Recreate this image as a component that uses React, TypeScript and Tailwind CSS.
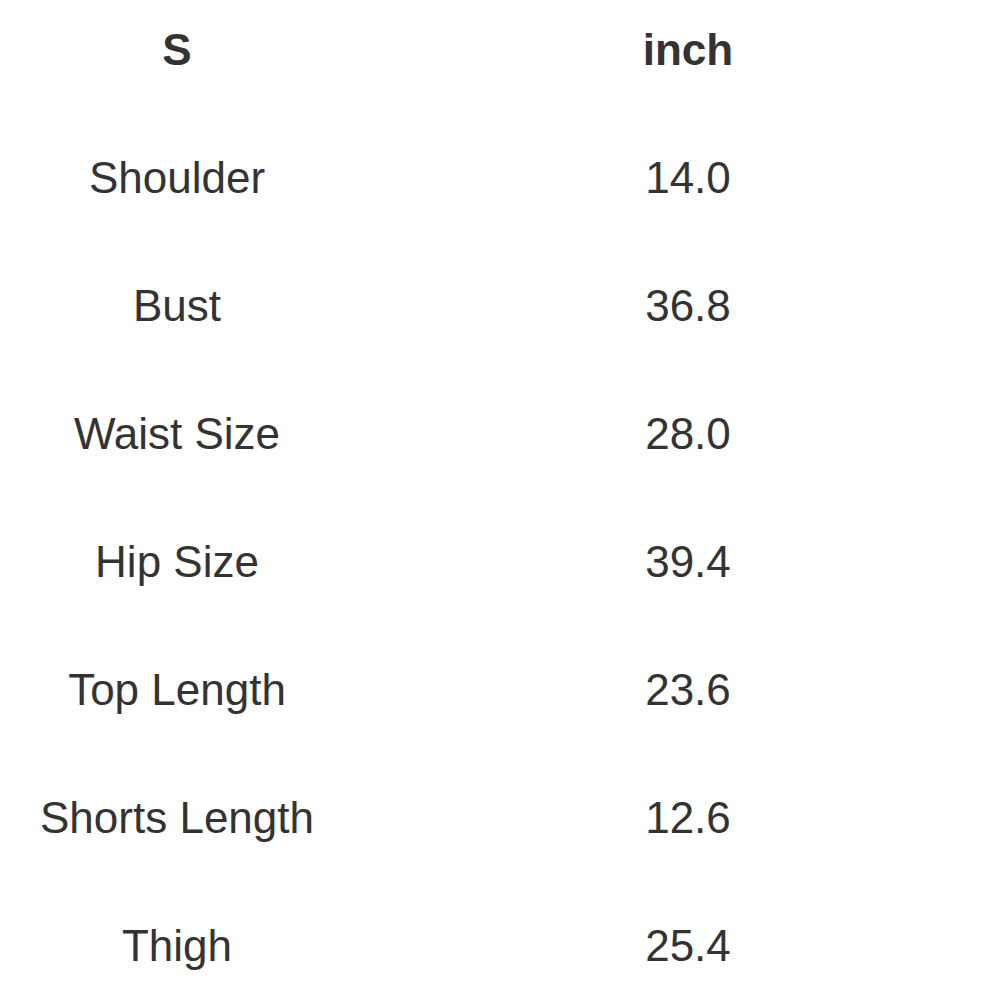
import React from "react";

const rows: [string, string][] = [
    ["Shoulder", "14.0"],
    ["Bust", "36.8"],
    ["Waist Size", "28.0"],
    ["Hip Size", "39.4"],
    ["Top Length", "23.6"],
    ["Shorts Length", "12.6"],
    ["Thigh", "25.4"],
];

export default function App() {
    return (
        <div
            className="w-[1000px] h-[1000px] overflow-hidden bg-white text-[#333333] text-[44px]"
            style={{ fontFamily: '"Liberation Sans", Arial, sans-serif' }}
        >
            <div className="grid grid-cols-[354px_624px] gap-x-[22px]">
                <div className="h-[114px] pb-[14px] flex items-center justify-center font-bold">S</div>
                <div className="h-[114px] pb-[14px] flex items-center justify-center font-bold">inch</div>
                {rows.map(([label, value]) => (
                    <React.Fragment key={label}>
                        <div className="h-[128px] flex items-center justify-center">{label}</div>
                        <div className="h-[128px] flex items-center justify-center">{value}</div>
                    </React.Fragment>
                ))}
            </div>
        </div>
    );
}
